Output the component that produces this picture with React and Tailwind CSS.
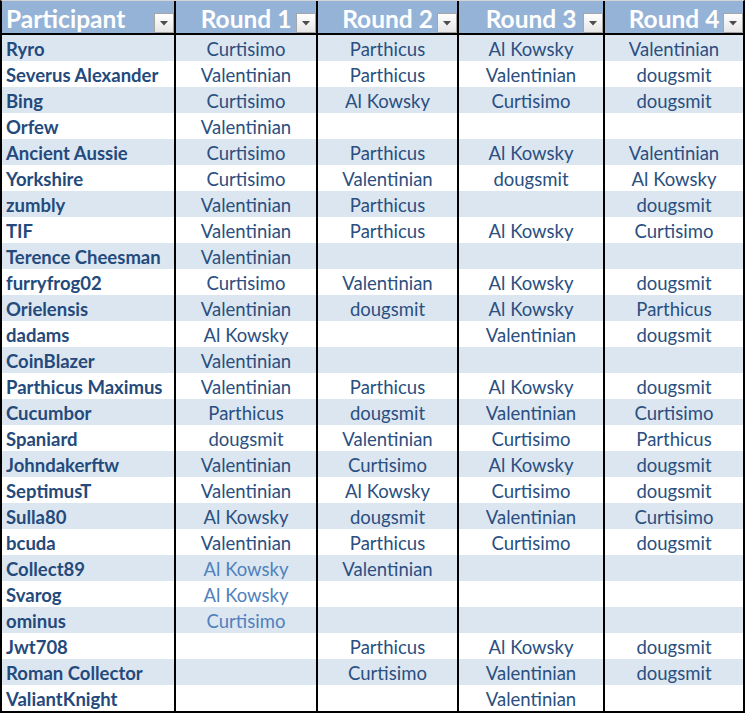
import React from 'react'

const rows = [
  ['Ryro', 'Curtisimo', 'Parthicus', 'Al Kowsky', 'Valentinian'],
  ['Severus Alexander', 'Valentinian', 'Parthicus', 'Valentinian', 'dougsmit'],
  ['Bing', 'Curtisimo', 'Al Kowsky', 'Curtisimo', 'dougsmit'],
  ['Orfew', 'Valentinian', '', '', ''],
  ['Ancient Aussie', 'Curtisimo', 'Parthicus', 'Al Kowsky', 'Valentinian'],
  ['Yorkshire', 'Curtisimo', 'Valentinian', 'dougsmit', 'Al Kowsky'],
  ['zumbly', 'Valentinian', 'Parthicus', '', 'dougsmit'],
  ['TIF', 'Valentinian', 'Parthicus', 'Al Kowsky', 'Curtisimo'],
  ['Terence Cheesman', 'Valentinian', '', '', ''],
  ['furryfrog02', 'Curtisimo', 'Valentinian', 'Al Kowsky', 'dougsmit'],
  ['Orielensis', 'Valentinian', 'dougsmit', 'Al Kowsky', 'Parthicus'],
  ['dadams', 'Al Kowsky', '', 'Valentinian', 'dougsmit'],
  ['CoinBlazer', 'Valentinian', '', '', ''],
  ['Parthicus Maximus', 'Valentinian', 'Parthicus', 'Al Kowsky', 'dougsmit'],
  ['Cucumbor', 'Parthicus', 'dougsmit', 'Valentinian', 'Curtisimo'],
  ['Spaniard', 'dougsmit', 'Valentinian', 'Curtisimo', 'Parthicus'],
  ['Johndakerftw', 'Valentinian', 'Curtisimo', 'Al Kowsky', 'dougsmit'],
  ['SeptimusT', 'Valentinian', 'Al Kowsky', 'Curtisimo', 'dougsmit'],
  ['Sulla80', 'Al Kowsky', 'dougsmit', 'Valentinian', 'Curtisimo'],
  ['bcuda', 'Valentinian', 'Parthicus', 'Curtisimo', 'dougsmit'],
  ['Collect89', 'Al Kowsky', 'Valentinian', '', ''],
  ['Svarog', 'Al Kowsky', '', '', ''],
  ['ominus', 'Curtisimo', '', '', ''],
  ['Jwt708', '', 'Parthicus', 'Al Kowsky', 'dougsmit'],
  ['Roman Collector', '', 'Curtisimo', 'Valentinian', 'dougsmit'],
  ['ValiantKnight', '', '', 'Valentinian', ''],
]

// round 1 picks that show in the lighter blue
const faded = ['Collect89', 'Svarog', 'ominus']

const cols = 'grid grid-cols-[174px_142px_141px_146px_138px]'

function Dropdown() {
  return (
    <div className='absolute right-0 bottom-0 w-[20px] h-[20px] border border-[#a6a6a6] bg-gradient-to-b from-white to-[#e6e6e6] flex items-center justify-center'>
      <svg width='8' height='5' viewBox='0 0 8 5'>
        <path d='M0 0 H8 L4 4.5 Z' fill='#4d4d4d' />
      </svg>
    </div>
  )
}

export default function App() {
  const headers = ['Participant', 'Round 1', 'Round 2', 'Round 3', 'Round 4']

  return (
    <div className='w-[747px] h-[715px] bg-white' style={{ fontFamily: 'Lato, "Liberation Sans", sans-serif' }}>
      <div className='w-[745px] border-l-2 border-r-2 border-b-2 border-black border-t border-t-[#d4d4d4]'>

        <div className={`${cols} h-[34px] bg-[#95b3d7] border-b-2 border-black`}>
          {headers.map((h, i) => (
            <div
              key={h}
              className={`relative flex items-center text-white font-bold text-[24.5px] leading-none pt-[4px] whitespace-nowrap ${i < 4 ? 'border-r-2 border-black' : ''} ${i === 0 ? 'pl-[4px]' : 'justify-center'}`}
            >
              {h}
              <Dropdown />
            </div>
          ))}
        </div>

        {rows.map((r, idx) => (
          <div key={r[0]} className={`${cols} h-[26px] ${idx % 2 === 0 ? 'bg-[#dce6f1]' : 'bg-white'}`}>
            {r.map((c, i) => (
              <div
                key={i}
                className={`flex items-center leading-none whitespace-nowrap pt-[3px] ${i < 4 ? 'border-r-2 border-black' : ''} ${
                  i === 0
                    ? 'pl-[4px] text-[18.5px] font-bold text-[#244a7c]'
                    : `justify-center text-[18.5px] ${i === 1 && faded.includes(r[0]) ? 'text-[#4f81bd]' : 'text-[#2a4f80]'}`
                }`}
              >
                {c}
              </div>
            ))}
          </div>
        ))}
      </div>
    </div>
  )
}
